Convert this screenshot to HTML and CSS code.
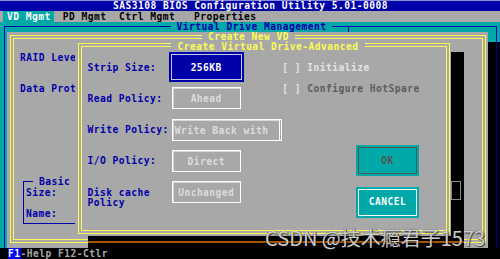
FILE: index.html
```html
<!DOCTYPE html>
<html lang="en">
<head>
    <meta charset="UTF-8">
    <meta name="viewport" content="width=device-width, initial-scale=1.0">
    <title>SAS3108 BIOS Configuration Utility</title>
    <link rel="stylesheet" href="styles.css">
</head>
<body>
    <div class="screen">
        <div class="titlebar">SAS3108 BIOS Configuration Utility 5.01-0008</div>
        <div class="menubar"><span class="tab active">VD Mgmt</span><span class="tab pd">PD Mgmt</span><span class="tab ctrl">Ctrl Mgmt</span><span class="tab">Properties</span></div>

        <div class="desk">
            <!-- main panel -->
            <div class="vd-frame">
                <div class="vd-title"><span>Virtual Drive Management</span></div>
            </div>

            <!-- Create New VD window -->
            <div class="win create-vd">
                <div class="dframe">
                    <div class="dtitle"><span>Create New VD</span></div>
                    <div class="vd-form">
                        <div class="lbl raid">RAID Level:</div>
                        <div class="lbl prot">Data Protection:</div>
                        <fieldset class="basic">
                            <legend>Basic</legend>
                            <div class="lbl">Size:</div>
                            <div class="lbl blank"></div>
                            <div class="lbl">Name:</div>
                        </fieldset>
                    </div>
                </div>
            </div>

            <!-- shadow of the advanced window -->
            <div class="adv-shadow"><span class="dim-box"></span></div>

            <!-- Advanced window -->
            <div class="win advanced">
                <div class="dframe">
                    <div class="dtitle adv-title"><span>Create Virtual Drive-Advanced</span></div>
                    <div class="adv-form">
                        <div class="lbl strip-lbl">Strip Size:</div>
                        <div class="field focus f-strip">256KB</div>
                        <div class="chk chk-init">[ ] Initialize</div>

                        <div class="chk chk-hot">[ ] <span class="off">Configure HotSpare</span></div>
                        <div class="lbl read-lbl">Read Policy:</div>
                        <div class="field f-read">Ahead</div>

                        <div class="lbl write-lbl">Write Policy:</div>
                        <div class="field f-write">Write Back with</div>

                        <div class="lbl io-lbl">I/O Policy:</div>
                        <div class="field f-io">Direct</div>
                        <div class="btn btn-ok">OK</div>

                        <div class="lbl cache-lbl">Disk cache<br>Policy</div>
                        <div class="field f-cache">Unchanged</div>
                        <div class="btn btn-cancel">CANCEL</div>
                    </div>
                </div>
            </div>
        </div>

        <div class="statusbar"><span class="key">F1</span>-Help F12-Ctlr</div>
        <div class="watermark">CSDN @技术瘾君子1573</div>
    </div>
</body>
</html>
```

FILE: styles.css
```css
body {
    margin: 0;
    background: #000;
    font-family: 'DejaVu Sans Mono', 'Liberation Mono', monospace;
    font-weight: bold;
    font-size: 9.6px;
    letter-spacing: 0.47px;
    line-height: 10.36px;
}
.screen {
    position: relative;
    width: 500px;
    height: 259px;
    overflow: hidden;
    display: grid;
    grid-template-rows: 11px 11px 1fr 11px;
}
.titlebar {
    background: #0000a8;
    color: #fcfcfc;
    text-align: center;
    line-height: 10px;
    border-top: 1px solid #8c8cd8;
    padding-left: 1px;
}
.menubar {
    background: #a8a8a8;
    color: #000;
    line-height: 11px;
    padding-left: 3px;
    white-space: pre;
}
.tab.active {
    background: #00a8a8;
    color: #fcfcfc;
    padding: 0 3px 0 4px;
    margin-right: 9px;
}
.tab.pd { margin-right: 12.5px; }
.tab.ctrl { margin-right: 18.75px; }

/* desk */
.desk {
    position: relative;
    overflow: hidden;
    background: #00a8a8;
    padding: 4px 3px 0 4px;
}
.vd-frame {
    position: relative;
    z-index: 2;
    height: 100%;
    box-sizing: border-box;
    border: 1px solid #0000a8;
    border-bottom: none;
}
.vd-frame::after {
    content: '';
    position: absolute;
    left: 343px;
    top: 0;
    width: 1px;
    height: 5px;
    background: #0000a8;
}
.vd-title {
    display: flex;
    justify-content: center;
    height: 10px;
    line-height: 10px;
    margin-top: -5px;
    padding-left: 2px;
    color: #0000a8;
}
.vd-title span {
    background: #00a8a8;
    padding: 0 6px;
}

/* windows */
.win {
    position: absolute;
    background: #a8a8a8;
    box-sizing: border-box;
}
.dframe {
    height: 100%;
    box-sizing: border-box;
    border: 4px double #fcfc54;
}
.dtitle {
    display: flex;
    justify-content: center;
    height: 10.36px;
    color: #fcfc54;
}
.dtitle span {
    background: #a8a8a8;
    padding: 0 6px;
}
.lbl {
    color: #0000a8;
    white-space: nowrap;
}
.vd-form .lbl, .adv-form .lbl, .chk {
    padding-top: 1px;
}

.create-vd {
    left: 7px;
    top: 10px;
    right: 12px;
    bottom: 0;
    padding: 3px 2px 5px 3px;
    box-shadow: 12px 10px 0 #000;
}
.create-vd .dtitle {
    margin-top: -7px;
    height: 9.44px;
    line-height: 9.4px;
    padding-left: 1px;
}
.vd-form {
    display: grid;
    grid-template-rows: repeat(20, 10.36px);
    padding-left: 6px;
}
.raid { grid-row: 2; }
.prot { grid-row: 5; }
.basic {
    grid-row: 14 / span 5;
    align-self: start;
    margin: 0 0 0 3px;
    width: 70px;
    padding: 0 0 4.6px 2px;
    border: 1px solid #0000a8;
    min-width: 0;
}
.basic legend {
    color: #0000a8;
    margin-left: 7px;
    padding: 1px 6px 0;
    line-height: 10.36px;
}
.basic .lbl {
    padding-top: 0;
    height: 10.36px;
    position: relative;
    top: 1px;
}

.adv-shadow {
    position: absolute;
    left: 87.5px;
    top: 29.8px;
    width: 376px;
    bottom: 0;
    background: #000;
}
.adv-shadow::after {
    content: '';
    position: absolute;
    left: 0;
    right: 0;
    top: 189px;
    height: 2.5px;
    background: #a85400;
}
.dim-box {
    position: absolute;
    left: 363.5px;
    top: 129px;
    width: 10px;
    height: 19px;
    box-sizing: border-box;
    border: 1px solid #8c8c8c;
}

.advanced {
    left: 75px;
    top: 19px;
    width: 376px;
    height: 195px;
    padding: 2px 1px 2px 3px;
}
.adv-title {
    margin-top: -5.5px;
    padding-left: 8px;
}
.adv-form {
    display: grid;
    grid-template-rows: repeat(17, 10.36px);
    grid-template-columns: 81.25px 112.5px 75px 62.5px 1fr;
    padding-left: 5.5px;
}
.strip-lbl { grid-row: 2; grid-column: 1; }
.read-lbl { grid-row: 5; grid-column: 1; }
.write-lbl { grid-row: 8; grid-column: 1; }
.io-lbl { grid-row: 11; grid-column: 1; }
.cache-lbl { grid-row: 14 / span 2; grid-column: 1; }

.chk {
    grid-column: 3 / -1;
    color: #e4e4e4;
    white-space: pre;
    padding-left: 1px;
}
.chk .off { color: #5c5c5c; }
.chk-init { grid-row: 2; }
.chk-hot { grid-row: 4; }

.field {
    grid-column: 2;
    align-self: center;
    justify-self: start;
    box-sizing: border-box;
    height: 22px;
    width: 69px;
    margin-left: 3px;
    border: 1px solid #fcfcfc;
    box-shadow: inset 1px 1px 0 #d8d8d8;
    color: #dcdcdc;
    text-align: center;
    line-height: 21px;
    white-space: nowrap;
    overflow: hidden;
}
.field.focus {
    grid-row: 1 / span 3;
    height: 30px;
    width: 75px;
    margin-left: 0;
    background: #0000a8;
    border: 2px solid #0000a8;
    box-shadow: inset 0 0 0 1px #c8c8e8;
    color: #fcfcfc;
    line-height: 27px;
}
.f-read { grid-row: 4 / span 3; }
.f-write {
    grid-row: 7 / span 3;
    width: 110px;
    text-align: left;
    padding-left: 2px;
    border-right: 3px double #fcfcfc;
}
.f-io { grid-row: 10 / span 3; }
.f-cache { grid-row: 13 / span 3; }

.btn {
    grid-column: 4;
    background: #00a8a8;
    box-sizing: border-box;
    height: 31px;
    padding: 3px 2px 2px;
    display: flex;
    align-items: center;
    justify-content: center;
}
.btn-ok {
    grid-row: 10 / span 3;
    color: #545454;
    box-shadow: inset 0 0 0 2px #00a8a8, inset 0 0 0 3px #545454;
}
.btn-cancel {
    grid-row: 14 / span 3;
    color: #fcfcfc;
    box-shadow: inset 0 0 0 2px #00a8a8, inset 0 0 0 3px #fcfcfc;
}

.statusbar {
    background: #000;
    color: #a8a8a8;
    padding-left: 8px;
    line-height: 11px;
}
.key {
    background: #0000fc;
    color: #fcfcfc;
}

.watermark {
    position: absolute;
    z-index: 3;
    left: 265px;
    top: 225px;
    font-family: 'Noto Sans CJK SC', 'Noto Sans', sans-serif;
    font-weight: normal;
    font-size: 20px;
    letter-spacing: 0;
    line-height: 26px;
    color: rgba(235, 235, 235, 0.85);
    text-shadow: 0 0 1px #222, 1px 1px 1px rgba(0, 0, 0, 0.6);
    white-space: nowrap;
}
```
